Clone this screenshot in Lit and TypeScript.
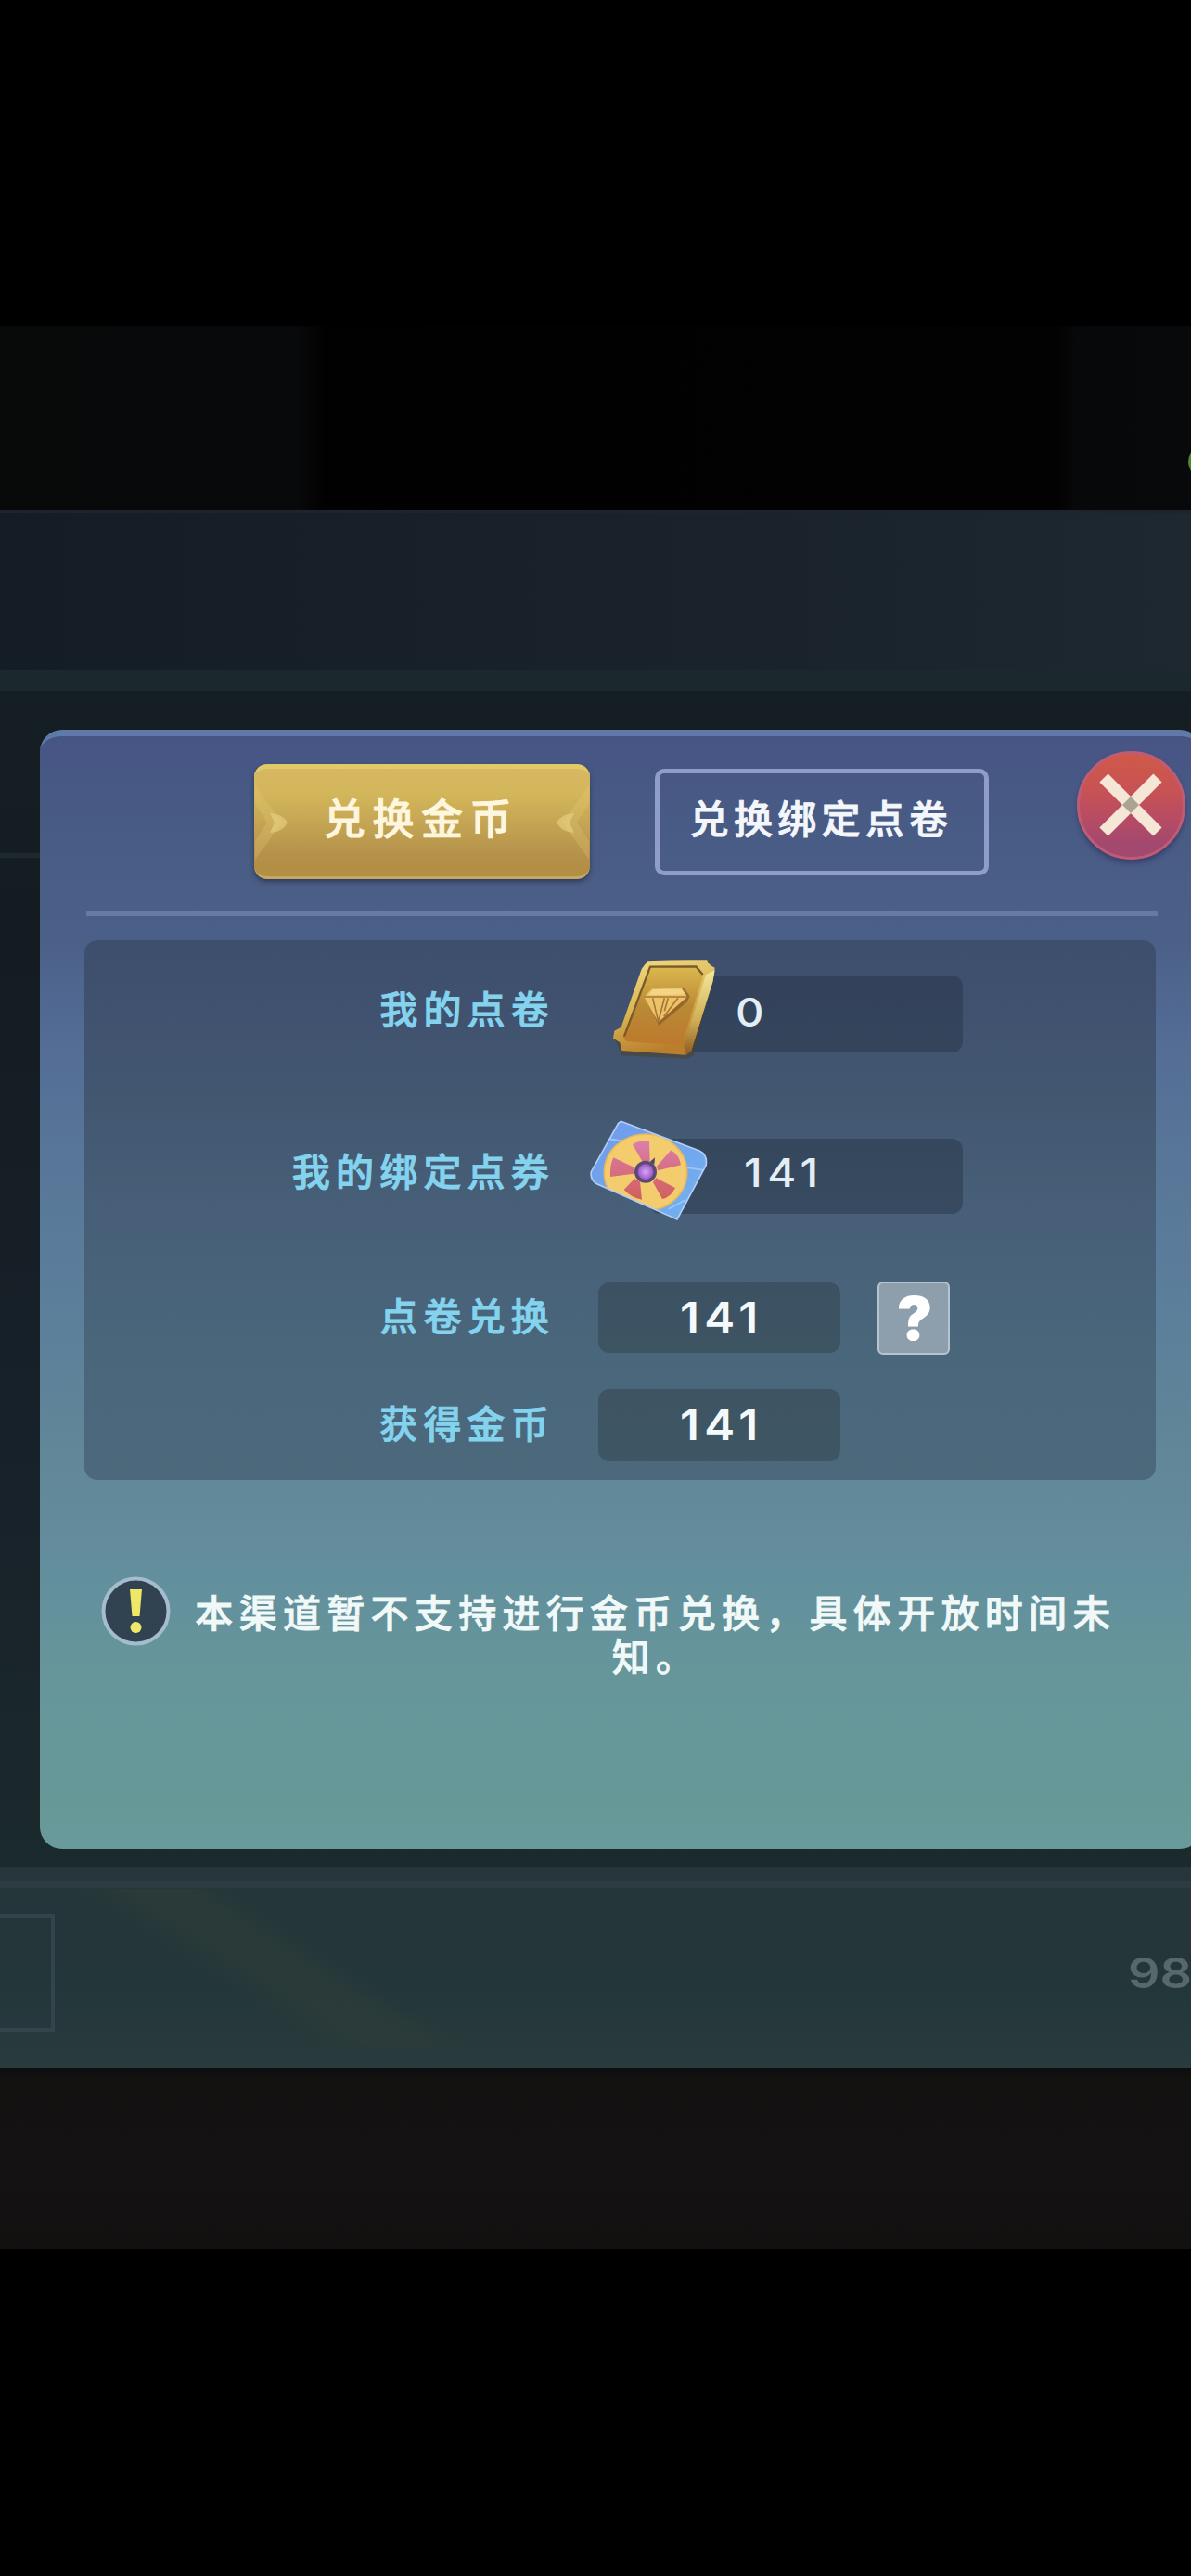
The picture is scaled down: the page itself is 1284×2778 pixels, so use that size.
import { LitElement, html, css, svg, nothing } from 'lit';
import { customElement, property, state } from 'lit/decorators.js';
import { classMap } from 'lit/directives/class-map.js';

export type VoucherIcon = 'gold' | 'bound';
export type FieldSize = 'wide' | 'compact';

interface ExchangeRow {
  id: string;
  label: string;
  value: string;
  size: FieldSize;
  icon?: VoucherIcon;
  help?: boolean;
}

const ROWS: ExchangeRow[] = [
  { id: 'points', label: '我的点卷', value: '0', size: 'wide', icon: 'gold' },
  { id: 'bound', label: '我的绑定点券', value: '141', size: 'wide', icon: 'bound' },
  { id: 'spend', label: '点卷兑换', value: '141', size: 'compact', help: true },
  { id: 'gain', label: '获得金币', value: '141', size: 'compact' },
];

const TABS = ['兑换金币', '兑换绑定点卷'];

const goldVoucher = svg`
  <defs>
    <linearGradient id="rim" x1="0" y1="0" x2="0.3" y2="1">
      <stop offset="0" stop-color="#f3dc86" />
      <stop offset="0.55" stop-color="#d9b653" />
      <stop offset="1" stop-color="#b97f2c" />
    </linearGradient>
    <linearGradient id="face" x1="0" y1="0" x2="0" y2="1">
      <stop offset="0" stop-color="#dcb94f" />
      <stop offset="0.5" stop-color="#b98a35" />
      <stop offset="1" stop-color="#bd7a2c" />
    </linearGradient>
    <linearGradient id="side" x1="0" y1="0" x2="0" y2="1">
      <stop offset="0" stop-color="#f4e79c" />
      <stop offset="0.6" stop-color="#cfae55" />
      <stop offset="1" stop-color="#8c5c22" />
    </linearGradient>
  </defs>
  <path d="M238 84 L420 82 L432 98 L452 112 L384 384 L366 394 L152 384 L130 334 Z" fill="#4d4330" opacity="0.6" />
  <path d="M236 78 Q330 73 428 75 Q432 92 453 100 L446 146 L376 370 L358 382 L152 368 L146 342 L124 328 L128 304 L150 292 L216 104 Z" fill="url(#rim)" />
  <path d="M376 370 L446 146 L453 108 L424 122 L406 180 L352 354 L360 380 Z" fill="url(#side)" />
  <path d="M244 96 L392 95 L416 120 L404 160 L346 352 L166 338 L156 322 Z" fill="url(#face)" />
  <path d="M414 122 L392 96 L244 97 L160 322" fill="none" stroke="#7b5a2a" stroke-width="7" />
  <path d="M256 166 L352 164 L372 192 L364 210 L272 286 L232 206 L226 194 Z" fill="#865a26" opacity="0.7" />
  <path d="M250 168 L346 166 L364 194 L270 276 L224 194 Z" fill="#edc368" />
  <path d="M224 194 L364 194 M252 198 L270 274 L290 198 M302 198 L290 240 M334 198 L288 258" fill="none" stroke="#a87735" stroke-width="5" />
  <path d="M254 170 L344 169 L356 186 L238 188 Z" fill="#f3d588" />
`;

const boundVoucher = svg`
  <defs>
    <linearGradient id="card" x1="0" y1="0" x2="1" y2="1">
      <stop offset="0" stop-color="#6f9bea" />
      <stop offset="1" stop-color="#72b2f0" />
    </linearGradient>
    <linearGradient id="blade" gradientUnits="userSpaceOnUse" x1="0" y1="655" x2="0" y2="850">
      <stop offset="0" stop-color="#dd7fae" />
      <stop offset="1" stop-color="#d0605c" />
    </linearGradient>
    <radialGradient id="hub">
      <stop offset="0" stop-color="#d9a6f4" />
      <stop offset="1" stop-color="#9a59c8" />
    </radialGradient>
    <clipPath id="edge">
      <path d="M150 598 L400 692 Q428 706 421 740 L328 914 L70 800 Q46 788 50 760 L134 610 Q140 597 150 598 Z" />
    </clipPath>
  </defs>
  <path d="M150 598 L400 692 Q428 706 421 740 L328 914 L70 800 Q46 788 50 760 L134 610 Q140 597 150 598 Z" fill="url(#card)" />
  <g clip-path="url(#edge)">
    <path d="M96 652 L150 660 M330 742 L424 756 M300 880 L356 850" stroke="#9cc6f6" stroke-width="5" />
    <ellipse cx="226" cy="762" rx="134" ry="124" fill="#f3cd6d" stroke="#eab75c" stroke-width="5" />
    <g fill="url(#blade)">
      <path d="M216 728 L184 672 Q210 654 238 662 L240 726 Z" />
      <path d="M262 742 L308 690 Q336 706 340 738 L266 756 Z" />
      <path d="M260 780 L322 812 Q308 842 280 848 L250 794 Z" />
      <path d="M208 792 L214 850 Q182 846 156 818 L190 782 Z" />
      <path d="M188 766 L112 776 Q110 738 122 714 L190 746 Z" />
    </g>
  </g>
  <path d="M240 728 L256 714 L254 736 Z" fill="#4b4668" />
  <circle cx="226" cy="760" r="36" fill="#5c4a74" />
  <circle cx="226" cy="760" r="25" fill="url(#hub)" />
  <path d="M150 598 L400 692 Q428 706 421 740 L328 914 L70 800 Q46 788 50 760 L134 610 Q140 597 150 598 Z" fill="none" stroke="#b3cdf8" stroke-width="5" />
`;

/**
 * @description Voucher artwork that overlaps the left edge of a balance field
 * @element voucher-icon
 */
@customElement('voucher-icon')
export class VoucherIconElement extends LitElement {
  static styles = css`
    :host,
    .art {
      display: block;
    }

    .art--gold {
      width: 115px;
      height: 110px;
    }

    .art--bound {
      width: 130px;
      height: 110px;
    }
  `;

  @property({ type: String })
  kind: VoucherIcon = 'gold';

  render() {
    return this.kind === 'gold'
      ? html`<svg class="art art--gold" viewBox="115 68 345 330">${goldVoucher}</svg>`
      : html`<svg class="art art--bound" viewBox="40 590 390 330">${boundVoucher}</svg>`;
  }
}

/**
 * @description One labelled value inside the exchange panel
 * @element exchange-row
 */
@customElement('exchange-row')
export class ExchangeRowElement extends LitElement {
  static styles = css`
    :host {
      display: flex;
      align-items: center;
    }

    .label {
      box-sizing: border-box;
      width: 509px;
      padding-right: 2px;
      color: #84d3ee;
      font-size: 41px;
      font-weight: 500;
      -webkit-text-stroke: 0.9px currentColor;
      letter-spacing: 6.2px;
      line-height: 60px;
      text-align: right;
      margin-top: -16px;
    }

    .label--compact {
      margin-top: -8px;
    }

    .field {
      position: relative;
      box-sizing: border-box;
      height: 100%;
      display: flex;
      align-items: center;
      border-radius: 12px;
      background: rgba(36, 50, 68, 0.46);
    }

    .field--wide {
      width: 338px;
      margin-left: 100px;
      padding: 0 0 6px 93px;
    }

    .field--bound {
      padding: 0 0 9px 102px;
    }

    .field--compact {
      width: 261px;
      margin-left: 45px;
      padding-left: 4px;
      justify-content: center;
      background: rgba(45, 60, 66, 0.42);
    }

    .value {
      display: inline-block;
      color: #e3edf5;
      font-family: Inter, 'Liberation Sans', sans-serif;
      font-size: 43px;
      font-weight: 500;
      letter-spacing: 5px;
      line-height: 50px;
      transform: scaleX(1.1);
      transform-origin: left center;
    }

    .value--compact {
      color: #f4fafc;
      font-size: 45px;
      font-weight: 600;
      transform-origin: center;
    }

    voucher-icon {
      position: absolute;
    }

    .icon--gold {
      left: -42px;
      top: -19px;
    }

    .icon--bound {
      left: -66px;
      top: -21px;
    }

    .help {
      box-sizing: border-box;
      width: 78px;
      height: 79px;
      margin-left: 40px;
      padding: 0 0 0 2px;
      border: 2px solid #b5c4cf;
      border-radius: 6px;
      background: #8d9eac;
      color: #fff;
      font-family: Inter, 'Liberation Sans', sans-serif;
      font-size: 65px;
      font-weight: 900;
      line-height: 75px;
      text-align: center;
    }
  `;

  @property({ attribute: false })
  row: ExchangeRow = ROWS[0];

  render() {
    const { label, value, size, icon, help } = this.row;
    const compact = size === 'compact';

    return html`
      <div class=${classMap({ label: true, 'label--compact': compact })}>${label}</div>
      <div class=${classMap({
        field: true,
        'field--wide': !compact,
        'field--compact': compact,
        'field--bound': icon === 'bound',
      })}>
        ${icon ? html`<voucher-icon class="icon--${icon}" .kind=${icon}></voucher-icon>` : nothing}
        <span class=${classMap({ value: true, 'value--compact': compact })}>${value}</span>
      </div>
      ${help ? html`<button class="help">?</button>` : nothing}
    `;
  }
}

@customElement('app-root')
export class AppRoot extends LitElement {
  static styles = css`
    :host {
      display: block;
      width: 1284px;
      height: 2778px;
      box-sizing: border-box;
      padding: 352px 0 353px;
      overflow: hidden;
      background: #000;
      font-family: 'Noto Sans CJK SC', sans-serif;
    }

    .stage {
      display: flex;
      flex-direction: column;
      height: 2073px;
    }

    /* Dimmed game scene around the dialog */
    .scene-top {
      position: relative;
      height: 198px;
      overflow: hidden;
      background: linear-gradient(90deg, #080909 0, #08090b 320px, #020101 350px, #030202 1140px, #07080a 1160px, #08090b 100%);
    }

    .spark {
      position: absolute;
      left: 1281px;
      top: 134px;
      width: 16px;
      height: 24px;
      border-radius: 50%;
      background: #4c8a2c;
    }

    .scene-header {
      box-sizing: border-box;
      height: 195px;
      border-top: 3px solid #1d242b;
      border-bottom: 22px solid #1b292d;
      background: linear-gradient(90deg, #141c26, #19212a 50%, #1d2831);
    }

    .scene-body {
      position: relative;
      height: 1268px;
      box-sizing: border-box;
      padding: 42px 0 0 43px;
      background: linear-gradient(#151f23, #141c22 20%, #18222a 70%, #1b2a2c);
    }

    .scene-rule {
      position: absolute;
      left: 0;
      top: 175px;
      width: 43px;
      height: 5px;
      background: #1e292e;
    }

    .scene-footer {
      height: 217px;
      display: flex;
      justify-content: space-between;
      align-items: flex-start;
      overflow: hidden;
      background:
        linear-gradient(#2d3c42, #2d3c42) 0 16px / 100% 7px no-repeat,
        linear-gradient(33deg, transparent 40%, rgba(44, 60, 56, 0.7) 49%, rgba(44, 60, 56, 0.7) 57%, transparent 64%) 60px 24px / 440px 170px no-repeat,
        linear-gradient(#26363a, #23363a 60%, #293b3c);
    }

    .footer-slot {
      box-sizing: border-box;
      width: 59px;
      height: 127px;
      margin-top: 51px;
      border: 4px solid #33454a;
      border-left: none;
    }

    .footer-count {
      width: 68px;
      margin-top: 88px;
      color: #57676a;
      font-family: Inter, 'Liberation Sans', sans-serif;
      font-size: 45px;
      font-weight: 600;
      line-height: 54px;
      transform: scaleX(1.2);
      transform-origin: left center;
    }

    .scene-bottom {
      height: 195px;
      background: linear-gradient(#0c0e0f, #131211 14px, #141213 60%, #121110);
    }

    /* Dialog */
    .dialog {
      box-sizing: border-box;
      width: 1253px;
      height: 1207px;
      border-radius: 24px;
      border-top: 7px solid #5f7aa8;
      background: linear-gradient(
        #475585 0,
        #485b84 90px,
        #4b6088 220px,
        #536c95 320px,
        #587698 450px,
        #5b7e9b 600px,
        #618798 780px,
        #648c9c 870px,
        #62909d 920px,
        #66969a 1010px,
        #669898 1150px,
        #6a9b9c 100%
      );
    }

    .tabs {
      display: flex;
      align-items: flex-start;
      height: 188px;
      padding-left: 231px;
      box-sizing: border-box;
    }

    .tab {
      box-sizing: border-box;
      font-family: inherit;
      font-weight: 500;
      -webkit-text-stroke: 0.9px currentColor;
      padding: 0;
      color: #f3f6fb;
    }

    .tab--active {
      width: 362px;
      height: 124px;
      margin-top: 30px;
      display: flex;
      align-items: center;
      justify-content: space-between;
      border: none;
      border-top: 5px solid #e2ca66;
      border-bottom: 3px solid #c4a868;
      border-radius: 14px;
      background: linear-gradient(#d7b862, #d3b55a 25%, #bf9f51 60%, #b4904a 82%, #b28f40);
      box-shadow: 0 3px 5px rgba(40, 45, 70, 0.7);
      color: #fff6de;
      font-size: 45px;
      letter-spacing: 7.6px;
    }

    .tab--active .text {
      padding-right: 2px;
      margin-top: -13px;
    }

    .tab--idle {
      width: 360px;
      height: 115px;
      margin: 35px 0 0 70px;
      padding: 0 1px 12px 0;
      border: 5px solid #8f9dca;
      border-radius: 10px;
      background: none;
      font-size: 42px;
      letter-spacing: 5.3px;
    }

    .chevron {
      display: block;
      width: 38px;
      height: 84px;
    }

    .chevron--right {
      transform: scaleX(-1);
    }

    .close {
      width: 117px;
      height: 117px;
      margin: 16px 0 0 95px;
      padding: 0;
      box-sizing: border-box;
      border: 3px solid #bf5c74;
      border-radius: 50%;
      background: linear-gradient(#cf5a48, #c85254 35%, #b94c62 60%, #a3486f 88%);
      box-shadow: 0 4px 5px rgba(52, 52, 100, 0.7);
    }

    .close svg {
      display: block;
      width: 111px;
      height: 111px;
    }

    .divider {
      width: 1155px;
      height: 6px;
      margin-left: 50px;
      background: #677aa3;
    }

    .panel {
      width: 1155px;
      height: 582px;
      box-sizing: border-box;
      margin: 26px 0 0 48px;
      padding-top: 38px;
      border-radius: 14px;
      background: linear-gradient(#3e4e6d, #435771 30%, #475f78 50%, #49667b 75%, #4c697c);
    }

    .row--points {
      height: 83px;
      margin-bottom: 93px;
    }

    .row--bound {
      height: 81px;
      margin-bottom: 74px;
    }

    .row--spend {
      height: 76px;
      margin-bottom: 39px;
    }

    .row--gain {
      height: 78px;
    }

    .notice {
      display: flex;
      align-items: flex-start;
      margin: 104px 0 0 66px;
    }

    .notice-icon {
      display: block;
      width: 75px;
      height: 75px;
    }

    .notice-text {
      width: 998px;
      margin: 14px 0 0 24px;
      color: #f1f9f8;
      font-size: 41px;
      font-weight: 500;
      -webkit-text-stroke: 0.8px currentColor;
      letter-spacing: 6.3px;
      line-height: 47px;
      text-align: center;
    }
  `;

  @state()
  private _activeTab = 0;

  private _renderChevron(side: string) {
    return html`
      <svg class="chevron chevron--${side}" viewBox="0 0 38 84">
        <path d="M1 2 L30 42 L1 82 L1 62 L14 42 L1 22 Z" fill="#e6cf7c" opacity="0.25" />
        <path d="M17 32 Q30 32 36 42 Q30 53 17 53 L22 42 Z" fill="#e8d083" opacity="0.65" />
      </svg>
    `;
  }

  private _renderTab(label: string, index: number) {
    const active = index === this._activeTab;

    return html`
      <button
        class=${classMap({ tab: true, 'tab--active': active, 'tab--idle': !active })}
        @click=${() => { this._activeTab = index; }}
      >
        ${active ? this._renderChevron('left') : nothing}
        <span class="text">${label}</span>
        ${active ? this._renderChevron('right') : nothing}
      </button>
    `;
  }

  render() {
    return html`
      <div class="stage">
        <div class="scene-top"><div class="spark"></div></div>
        <div class="scene-header"></div>
        <div class="scene-body">
          <div class="scene-rule"></div>
          <section class="dialog">
            <div class="tabs">
              ${TABS.map((label, index) => this._renderTab(label, index))}
              <button class="close">
                <svg viewBox="0 0 111 111">
                  <path d="M26 26 L84 84 M84 26 L26 84" stroke="#f5e6d6" stroke-width="13" />
                  <path d="M55 46 L64 55 L55 64 L46 55 Z" fill="#a9a493" />
                </svg>
              </button>
            </div>
            <div class="divider"></div>
            <div class="panel">
              ${ROWS.map(row => html`<exchange-row class="row--${row.id}" .row=${row}></exchange-row>`)}
            </div>
            <div class="notice">
              <svg class="notice-icon" viewBox="0 0 75 75">
                <circle cx="37.5" cy="37.5" r="35" fill="#314350" stroke="#a4bccd" stroke-width="4" />
                <path d="M31 14 L44 14 L41.5 43 L33.5 43 Z" fill="#efe767" />
                <circle cx="37.5" cy="55" r="6" fill="#efe767" />
              </svg>
              <div class="notice-text">本渠道暂不支持进行金币兑换，具体开放时间未知。</div>
            </div>
          </section>
        </div>
        <div class="scene-footer">
          <div class="footer-slot"></div>
          <div class="footer-count">98</div>
        </div>
        <div class="scene-bottom"></div>
      </div>
    `;
  }
}

declare global {
  interface HTMLElementTagNameMap {
    'app-root': AppRoot;
    'exchange-row': ExchangeRowElement;
    'voucher-icon': VoucherIconElement;
  }
}
